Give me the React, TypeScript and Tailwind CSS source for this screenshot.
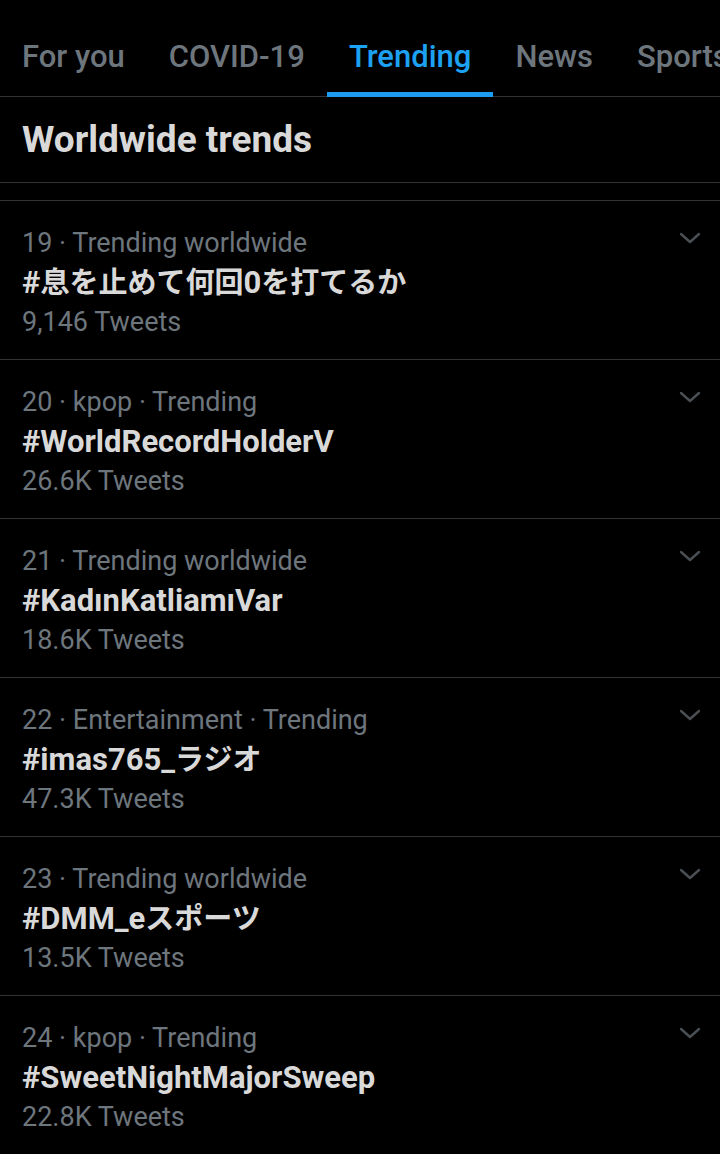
import React from 'react';

interface Trend {
    meta: string;
    tag: string;
    count: string;
}

const tabs = ['For you', 'COVID-19', 'Trending', 'News', 'Sports'];

const trends: Trend[] = [
    { meta: '19 · Trending worldwide', tag: '#息を止めて何回0を打てるか', count: '9,146 Tweets' },
    { meta: '20 · kpop · Trending', tag: '#WorldRecordHolderV', count: '26.6K Tweets' },
    { meta: '21 · Trending worldwide', tag: '#KadınKatliamıVar', count: '18.6K Tweets' },
    { meta: '22 · Entertainment · Trending', tag: '#imas765_ラジオ', count: '47.3K Tweets' },
    { meta: '23 · Trending worldwide', tag: '#DMM_eスポーツ', count: '13.5K Tweets' },
    { meta: '24 · kpop · Trending', tag: '#SweetNightMajorSweep', count: '22.8K Tweets' },
];

// japanese glyphs render a bit smaller than the latin ones in the app
const renderTag = (tag: string) =>
    tag.split(/([\u3000-\u9fff\uff00-\uffef]+)/).map((part, i) =>
        /[\u3000-\u9fff\uff00-\uffef]/.test(part) ? (
            <span key={i} className="text-[29px]">{part}</span>
        ) : (
            <span key={i}>{part}</span>
        )
    );

const Chevron = () => (
    <svg width="22" height="14" viewBox="0 0 22 14" fill="none">
        <path d="M2 3l9 8 9-8" stroke="#4a4f54" strokeWidth="2.4" strokeLinecap="round" strokeLinejoin="round" />
    </svg>
);

const TrendRow: React.FC<{ trend: Trend }> = ({ trend }) => (
    <div className="relative h-[159px] border-b border-[#2f3336] pl-[22px] pr-16 pt-[22px]">
        <div className="h-[40px] text-[27px] leading-[40px] text-[#6e767d]">{trend.meta}</div>
        <div className="h-[39px] text-[31px] leading-[39px] font-bold text-[#d9d9d9] whitespace-nowrap">
            {renderTag(trend.tag)}
        </div>
        <div className="h-[40px] text-[27px] leading-[40px] text-[#6e767d]">{trend.count}</div>
        <div className="absolute right-[19px] top-[30px]">
            <Chevron />
        </div>
    </div>
);

export default function App() {
    return (
        <div
            className="w-[720px] h-[1154px] overflow-hidden bg-black"
            style={{ fontFamily: 'Roboto, "Noto Sans CJK JP", "Noto Sans", sans-serif' }}
        >
            <div className="flex h-[97px] border-b border-[#2f3336] whitespace-nowrap">
                {tabs.map((t) => {
                    const active = t === 'Trending';
                    return (
                        <div key={t} className="relative flex items-center px-[22px] pt-[18px]">
                            <span
                                className={
                                    active
                                        ? 'text-[31px] font-medium text-[#1da1f2]'
                                        : 'text-[31px] font-medium text-[#6e767d]'
                                }
                            >
                                {t}
                            </span>
                            {active && <div className="absolute left-0 right-0 bottom-[-1px] h-[5px] bg-[#1d9bf0]" />}
                        </div>
                    );
                })}
            </div>
            <div className="h-[86px] flex items-center px-[22px] border-b border-[#2f3336]">
                <h2 className="text-[37px] font-bold text-[#d9d9d9]">Worldwide trends</h2>
            </div>
            <div className="h-[18px] border-b border-[#2f3336]" />
            {trends.map((t) => (
                <TrendRow key={t.tag} trend={t} />
            ))}
        </div>
    );
}
